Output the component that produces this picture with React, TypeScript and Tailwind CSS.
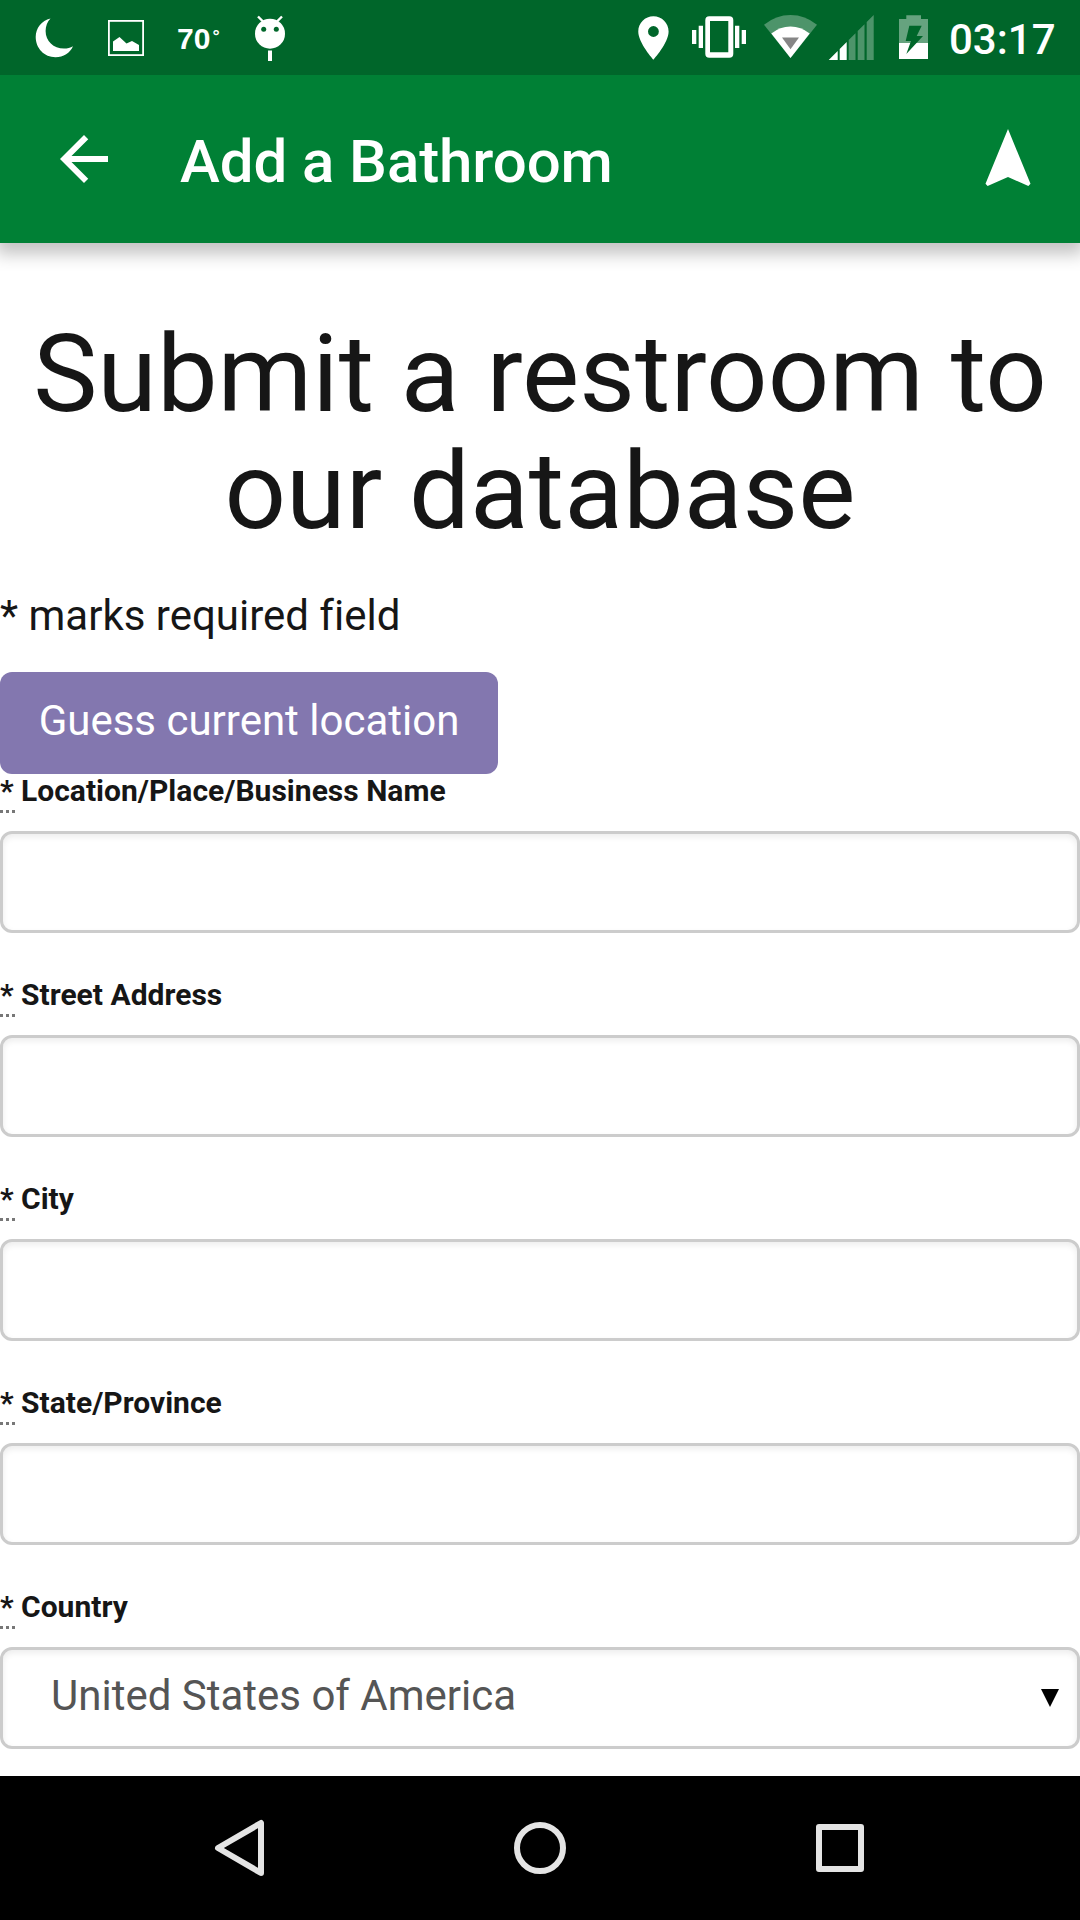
import React from "react";

function StatusBar() {
  return (
    <div className="relative z-10 flex h-[75px] items-start bg-[#00662a] text-white">
      <svg className="ml-[34px] mt-[14px] h-[46px] w-[42px] shrink-0" viewBox="34 14 42 46" fill="#fff">
        <path d="M50.5 18.5C41.500 20.800 35.700 28 35.700 37C35.700 48.300 44.300 57.200 55.500 57.200C63.500 57.200 70 53 73 46.200C70.500 47.700 67.300 48.600 64 48.600C53.500 48.600 45.600 41 45.600 31C45.600 26 47.400 21.700 50.500 18.500Z" />
      </svg>
      <svg className="ml-[32px] mt-[20px] h-9 w-9 shrink-0" viewBox="0 0 36 36">
        <rect x="0.850" y="0.850" width="34.300" height="34.300" fill="none" stroke="#fff" strokeWidth="1.900" />
        <path d="M5 31V21.500L11.500 17L18.500 23.500L24 21L31 25V31Z" fill="#fff" />
      </svg>
      <div className="ml-[33px] mt-[21px] flex w-[43px] items-start whitespace-nowrap font-['Liberation_Sans',sans-serif] font-bold">
        <span className="text-[30px] leading-[36px]">70</span>
        <span className="ml-[2px] mt-[6px] text-[18px] leading-[18px]">°</span>
      </div>
      <svg className="ml-[33px] mt-[14px] h-[48px] w-[34px] shrink-0" viewBox="253 14 34 48" fill="#fff">
        <circle cx="270" cy="33.700" r="15" />
        <path d="M258 16.500L264 22.500M282 16.500L276 22.500" stroke="#fff" strokeWidth="2.400" />
        <path d="M268 50.500h4V61h-4z" />
        <circle cx="263.700" cy="29.300" r="2.500" fill="#00662a" />
        <circle cx="276.300" cy="29.300" r="2.500" fill="#00662a" />
      </svg>
      <svg className="ml-[340px] mt-[12px] h-[52px] w-[52px] shrink-0" viewBox="-0.200 0 24 24" fill="#fff">
        <path d="M12 2C8.130 2 5 5.130 5 9c0 5.250 7 13 7 13s7-7.750 7-13c0-3.870-3.130-7-7-7zm0 9.500a2.500 2.500 0 1 1 0-5 2.500 2.500 0 0 1 0 5z" />
      </svg>
      <svg className="ml-[12px] mt-[15px] h-[44px] w-[56px] shrink-0" viewBox="691 15 56 44" fill="#fff">
        <path d="M692 30h4.300v14H692zM698.700 25.700h4.300V48h-4.300zM735 25.700h4.300V48H735zM741.700 30h4.300v14h-4.300z" />
        <path fillRule="evenodd" d="M709.300 16.300h20a4 4 0 0 1 4 4v33.400a4 4 0 0 1-4 4h-20a4 4 0 0 1-4-4V20.300a4 4 0 0 1 4-4zM710 21v31.300h18.300V21z" />
      </svg>
      <svg className="ml-[16px] mt-[14px] h-[46px] w-[56px] shrink-0" viewBox="763 14 56 46">
        <path d="M764 24.700Q776 15 790.500 15T817 24.700L790.500 58Z" fill="#4d946a" />
        <path d="M771.300 33.500Q780 26.500 790.500 26.500T809.700 33.500L790.500 58Z" fill="#fff" />
        <path d="M782 37.500H799L790.500 49.300Z" fill="#868686" />
      </svg>
      <svg className="ml-[9px] mt-[14px] h-[46px] w-[48px] shrink-0" viewBox="828 14 48 46">
        <path d="M828.700 60L837.700 51V60ZM839.700 60V49L846.700 42V60Z" fill="#fff" />
        <path d="M848.700 60V40L855.500 33.200V60ZM857.700 60V31L864.500 24.200V60ZM866.700 60V22L873.700 15V60Z" fill="#4d946a" />
      </svg>
      <svg className="ml-[22px] mt-[14px] h-[46px] w-[32px] shrink-0" viewBox="898 14 32 46">
        <path d="M899 19h7.300v-3.700h14.700V19H928v24h-29z" fill="#66a37f" />
        <path d="M899 43h29v16h-29z" fill="#fff" />
        <path d="M909.300 25.700H921.700L916.700 36H923L906.300 54L911 41H905.700Z" fill="#00662a" />
      </svg>
      <span className="ml-[19px] mt-[15px] text-[42px] font-medium leading-[50px]">03:17</span>
    </div>
  );
}

function AppBar() {
  return (
    <header className="relative flex h-[168px] items-center bg-[#008035] pl-12 pr-9 text-white shadow-[0_7px_16px_4px_rgba(0,0,0,0.24)]">
      <svg className="h-[72px] w-[72px]" viewBox="0 0 24 24" fill="currentColor">
        <path d="M20 11H7.830l5.590-5.590L12 4l-8 8 8 8 1.410-1.410L7.830 13H20v-2z" />
      </svg>
      <h1 className="ml-[60px] mt-[6px] flex-1 text-[60px] font-medium leading-[70px] tracking-[-0.08px]">Add a Bathroom</h1>
      <svg className="h-[72px] w-[72px]" viewBox="0 0 24 24" fill="currentColor">
        <path d="M12 2L4.500 20.290l.710.710L12 18l6.790 3 .710-.710z" />
      </svg>
    </header>
  );
}

function Label({ text }: { text: string }) {
  return (
    <label className="flex h-[57px] items-start whitespace-pre text-[30px] font-bold leading-[33px]">
      <abbr title="required" className="relative h-[39px] w-[15px] overflow-visible no-underline">
        <span className="block">*</span>
        <span className="absolute bottom-0 left-0 flex gap-[3px]">
          <i className="h-[3px] w-[3px] bg-[#777]" />
          <i className="h-[3px] w-[3px] bg-[#777]" />
          <i className="h-[3px] w-[3px] bg-[#777]" />
        </span>
      </abbr>
      <span className="ml-[6px] tracking-[0.02px]">{text}</span>
    </label>
  );
}

const boxClass =
  "block h-[102px] w-full rounded-[12px] border-[3px] border-[#ccc] bg-white shadow-[inset_0_3px_6px_rgba(0,0,0,0.075)] outline-none";

export default function App() {
  return (
    <div className="flex h-[1920px] w-[1080px] flex-col overflow-hidden bg-white font-['Roboto',sans-serif] text-[#161616]">
      <StatusBar />
      <AppBar />
      <main className="flex-1 overflow-hidden">
        <h2 className="mt-[73px] text-center text-[108px] font-normal leading-[117px] tracking-[0.03px]">
          Submit a restroom to
          <br />
          our database
        </h2>
        <p className="mt-[36px] text-[42px] leading-[60px] [font-variant-ligatures:none]">* marks required field</p>
        <button className="mt-[26px] block h-[102px] w-[498px] rounded-[12px] bg-[#8377af] pb-[4px] text-[42px] leading-[60px] text-white">
          Guess current location
        </button>
        <form>
          {["Location/Place/Business Name", "Street Address", "City", "State/Province"].map((name) => (
            <div key={name} className="mb-[45px]">
              <Label text={name} />
              <input className={boxClass} aria-label={name} />
            </div>
          ))}
          <Label text="Country" />
          <div className={boxClass}>
            <div className="flex h-full items-center justify-between pl-12 pr-[18px]">
              <span className="pb-[4px] text-[42px] leading-[60px] text-[#555]">United States of America</span>
              <svg className="h-[18px] w-[18px]" viewBox="0 0 18 18">
                <path d="M0 0H18L9 18Z" />
              </svg>
            </div>
          </div>
        </form>
      </main>
      <nav className="flex h-[144px] shrink-0 items-center justify-center gap-[240px] bg-black">
        <svg className="h-[60px] w-[60px]" viewBox="210 1818 60 60" fill="none" stroke="#e4e4e4" strokeWidth="6" strokeLinejoin="round">
          <path d="M218 1848L261 1823V1873Z" />
        </svg>
        <svg className="h-[60px] w-[60px]" viewBox="0 0 60 60" fill="none" stroke="#e4e4e4" strokeWidth="6">
          <circle cx="30" cy="30" r="23" />
        </svg>
        <svg className="h-[60px] w-[60px]" viewBox="0 0 60 60" fill="none" stroke="#e4e4e4" strokeWidth="6" strokeLinejoin="round">
          <rect x="9" y="9" width="42" height="42" />
        </svg>
      </nav>
    </div>
  );
}
